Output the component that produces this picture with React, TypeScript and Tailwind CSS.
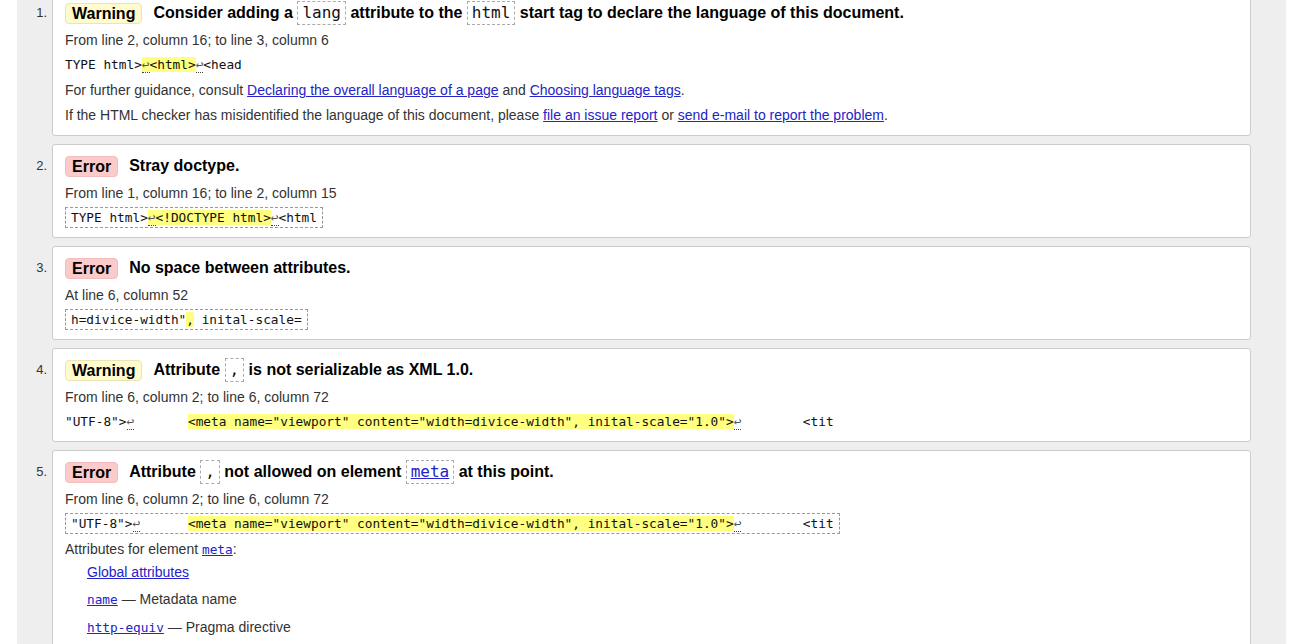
import React from "react";

const MONO = "font-['DejaVu_Sans_Mono',monospace]";
const LINK = "text-[#2323c7] underline";

function Ret() {
  return <span className="border-b border-dotted border-[#444] text-[#555]">↩</span>;
}

function Mark({ children }: { children: React.ReactNode }) {
  return <span className="bg-[#ffff80]">{children}</span>;
}

function TCode({ children }: { children: React.ReactNode }) {
  return (
    <span
      className={`${MONO} -my-[1px] inline-block h-[24px] align-top font-normal text-[16px] leading-[22px] px-[4px] border border-dashed border-[#aaaaaa] text-[#111]`}
    >
      {children}
    </span>
  );
}

function Badge({ kind }: { kind: "warning" | "error" }) {
  return kind === "warning" ? (
    <span className="shrink-0 rounded-[4px] border border-[#ebe5b4] bg-[#fffbcc] px-[6px] text-[16px] font-bold leading-[19px] text-black">
      Warning
    </span>
  ) : (
    <span className="shrink-0 rounded-[4px] border border-[#f3bdbd] bg-[#fbcaca] px-[6px] text-[16px] font-bold leading-[19px] text-black">
      Error
    </span>
  );
}

function Title({ kind, children }: { kind: "warning" | "error"; children: React.ReactNode }) {
  return (
    <div className="flex h-[22px] items-center gap-[11px]">
      <Badge kind={kind} />
      <span className="block h-[22px] whitespace-nowrap text-[16px] font-bold leading-[22px] text-black">{children}</span>
    </div>
  );
}

function Line({ first, children }: { first?: boolean; children: React.ReactNode }) {
  return (
    <p className={`${first ? "mt-[6px]" : "mt-[5px]"} text-[14px] leading-[20px] text-[#333]`}>{children}</p>
  );
}

function Extract({ boxed, children }: { boxed?: boolean; children: React.ReactNode }) {
  return (
    <p className={`mt-[5px] whitespace-pre text-[12.77px] leading-[20px] text-[#111] [tab-size:8] ${MONO}`}>
      {boxed ? (
        <span className="border border-dashed border-[#999] px-[5px] py-[2px]">{children}</span>
      ) : (
        children
      )}
    </p>
  );
}

function Item({ n, pb = "pb-[9px]", children }: { n: number; pb?: string; children: React.ReactNode }) {
  return (
    <li className="mt-[8px] flex first:mt-0">
      <div className="w-[35px] shrink-0 pr-[5px] pt-[11px] text-right text-[13px] leading-[22px] text-[#333]">
        {n}.
      </div>
      <div className={`flex-1 rounded-[3px] border border-[#cccccc] bg-white px-[12px] pt-[10px] ${pb}`}>
        {children}
      </div>
    </li>
  );
}

export default function App() {
  return (
    <div className="h-[644px] w-[1290px] overflow-hidden bg-white font-['Liberation_Sans',Arial,sans-serif]">
      <div className="ml-[17px] h-full w-[1269px] overflow-hidden bg-[#eeeeee] pr-[35px]">
        <ol className="-mt-[9px]">
          <Item n={1} pb="pb-[10px]">
            <Title kind="warning">
              Consider adding a <TCode>lang</TCode> attribute to the <TCode>html</TCode> start tag to declare the
              language of this document.
            </Title>
            <Line first>From line 2, column 16; to line 3, column 6</Line>
            <Extract>
              TYPE html&gt;
              <Mark>
                <Ret />
                &lt;html&gt;
              </Mark>
              <Ret />
              &lt;head
            </Extract>
            <Line>
              For further guidance, consult <a className={LINK}>Declaring the overall language of a page</a> and{" "}
              <a className={LINK}>Choosing language tags</a>.
            </Line>
            <Line>
              If the HTML checker has misidentified the language of this document, please{" "}
              <a className={LINK}>file an issue report</a> or <a className={LINK}>send e-mail to report the problem</a>.
            </Line>
          </Item>
          <Item n={2}>
            <Title kind="error">Stray doctype.</Title>
            <Line first>From line 1, column 16; to line 2, column 15</Line>
            <Extract boxed>
              TYPE html&gt;
              <Mark>
                <Ret />
                &lt;!DOCTYPE html&gt;
              </Mark>
              <Ret />
              &lt;html
            </Extract>
          </Item>
          <Item n={3}>
            <Title kind="error">No space between attributes.</Title>
            <Line first>At line 6, column 52</Line>
            <Extract boxed>
              h=divice-width"<Mark>,</Mark> inital-scale=
            </Extract>
          </Item>
          <Item n={4}>
            <Title kind="warning">
              Attribute <TCode>,</TCode> is not serializable as XML 1.0.
            </Title>
            <Line first>From line 6, column 2; to line 6, column 72</Line>
            <Extract>
              "UTF-8"&gt;
              <Ret />
              {"\t"}
              <Mark>&lt;meta name="viewport" content="width=divice-width", inital-scale="1.0"&gt;</Mark>
              <Ret />
              {"\t"}&lt;tit
            </Extract>
          </Item>
          <Item n={5}>
            <Title kind="error">
              Attribute <TCode>,</TCode> not allowed on element{" "}
              <TCode>
                <a className={LINK}>meta</a>
              </TCode>{" "}
              at this point.
            </Title>
            <Line first>From line 6, column 2; to line 6, column 72</Line>
            <Extract boxed>
              "UTF-8"&gt;
              <Ret />
              {"\t"}
              <Mark>&lt;meta name="viewport" content="width=divice-width", inital-scale="1.0"&gt;</Mark>
              <Ret />
              {"\t"}&lt;tit
            </Extract>
            <Line>
              Attributes for element <a className={`${LINK} ${MONO} text-[12.77px]`}>meta</a>:
            </Line>
            <p className="ml-[22px] mt-[2px] text-[14px] leading-[20px] text-[#333]">
              <a className={LINK}>Global attributes</a>
            </p>
            <p className="ml-[22px] mt-[7px] text-[14px] leading-[20px] text-[#333]">
              <a className={`${LINK} ${MONO} text-[12.77px]`}>name</a> — Metadata name
            </p>
            <p className="ml-[22px] mt-[7px] text-[14px] leading-[20px] text-[#333]">
              <a className={`${LINK} ${MONO} text-[12.77px]`}>http-equiv</a> — Pragma directive
            </p>
          </Item>
        </ol>
      </div>
    </div>
  );
}
